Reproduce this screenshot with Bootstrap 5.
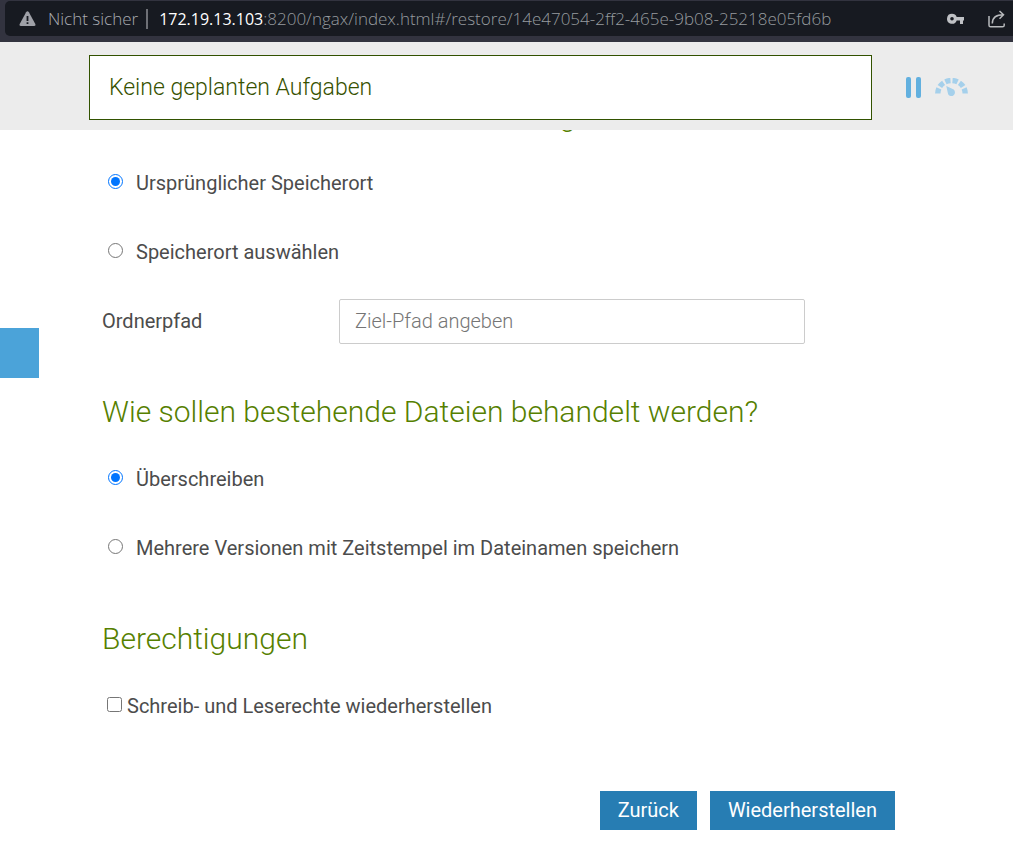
<!DOCTYPE html>
<html lang="de">
<head>
<meta charset="utf-8">
<meta name="viewport" content="width=device-width, initial-scale=1">
<title>Wiederherstellen</title>
<link href="https://cdn.jsdelivr.net/npm/bootstrap@5.3.0/dist/css/bootstrap.min.css" rel="stylesheet">
<style>
body { font-family: Roboto, "Liberation Sans", sans-serif; font-size: 20px; line-height: 24px; color: #4c4c4c; background: #fff; }
.browser-bar { background: #32333f; height: 42px; padding: 1px 0 6px 5px; }
.address { background: #171a21; border-radius: 5px 0 0 5px; height: 35px; padding: 0 8px 0 14px; font-family: "Open Sans", "Noto Sans", sans-serif; font-size: 17px; font-weight: 300; color: #a9abb1; }
.address .host { color: #fff; font-size: 16px; font-weight: 400; }
.address .path { color: #969a9f; }
.address .divider { width: 2px; height: 20px; background: #6e7076; margin: 0 11px 0 8px; }
.warn-icon { margin-right: 12px; }
.topbar { background: #ececec; height: 88px; padding: 2px 45px 0 89px; }
.task-box { height: 65px; border: 1px solid #325200; background: #fff; color: #365100; font-size: 23px; font-weight: 300; padding: 2px 19px 0; margin-right: 34px; }
.icon-btn { background: none; border: 0; padding: 0; line-height: 0; }
.pause-btn { margin-right: 14px; }
.side-tab { left: 0; top: 328px; width: 39px; height: 50px; background: #4ba3d9; border: 0; padding: 0; }
.page { padding: 0 118px 30px 102px; overflow: hidden; }
.section-title { font-size: 30px; line-height: 36px; font-weight: 300; color: #568000; margin: 50px 0 27px; }
.section-title.scrolled { margin-top: -32px; }
.line { height: 45px; padding-bottom: 2px; }
.line + .line { margin-top: 24px; }
.line input[type=radio] { width: 15px; height: 15px; margin: 0 13px 3px 6px; accent-color: #0075ff; }
.line input[type=checkbox] { width: 15px; height: 15px; margin: 0 5px 3px 5px; }
.path-line { padding-bottom: 0; }
.path-label { width: 237px; padding-bottom: 2px; }
.path-input { width: 466px; height: 45px; border: 1px solid #ccc; border-radius: 2px; font-size: 20px; font-weight: 300; padding: 0 15px 2px; }
.path-input::placeholder { color: #757575; opacity: 1; }
.actions { margin-top: 62px; gap: 13px; }
.action-btn { height: 39px; background: #277db3; color: #fff; border: 0; border-radius: 0; padding: 0 18px 1px; font-size: 20px; line-height: 24px; }
.action-btn:hover { background: #1f6a99; color: #fff; }
</style>
</head>
<body>
<div class="browser-bar">
  <div class="address d-flex align-items-center">
    <svg width="17" height="16" viewBox="0 0 17 16" class="warn-icon flex-shrink-0" aria-hidden="true"><path d="M7.1 1.2Q8.500-.7 9.900 1.200L16.300 13Q17 15 15 15H2Q0 15 .7 13Z" fill="#9fa1a8"/><path d="M7.600 5h1.800v5H7.600zM7.600 11.200h1.800V13H7.600z" fill="#171a21"/></svg>
    <span class="text-nowrap">Nicht sicher</span>
    <span class="divider"></span>
    <span class="text-nowrap"><span class="host">172.19.13.103</span><span class="path">:8200/ngax/index.html#/restore/14e47054-2ff2-465e-9b08-25218e05fd6b</span></span>
    <svg class="ms-auto me-4 flex-shrink-0" width="18" height="12" viewBox="0 0 18 12" aria-label="Passwort" role="img"><path fill-rule="evenodd" d="M6 .8a5 5 0 1 0 4.700 6.700H14V11h3V7.500h1V4.100H10.700A5 5 0 0 0 6 .8Zm0 3.200a1.800 1.800 0 1 1 0 3.600 1.800 1.800 0 0 1 0-3.600Z" fill="#bfc1c5"/></svg>
    <svg class="flex-shrink-0" width="17" height="18" viewBox="0 0 17 18" aria-label="Teilen" role="img" fill="none" stroke="#b8babd" stroke-width="1.500"><path d="M1 6V15.200Q1 16.800 2.600 16.800H14.500Q16.200 16.800 16.200 15.200V13.500M4.300 13.500C4.300 8 7.500 4.800 15.500 4.800M11.500 1l4 3.800-4 3.900"/></svg>
  </div>
</div>
<header class="topbar d-flex align-items-center">
  <div class="task-box d-flex align-items-center flex-grow-1">Keine geplanten Aufgaben</div>
  <button class="icon-btn pause-btn" type="button" aria-label="Pause"><svg width="15" height="21" viewBox="0 0 15 21" fill="#62b0df"><rect width="5" height="21" rx="2"/><rect x="10" width="5" height="21" rx="2"/></svg></button>
  <button class="icon-btn" type="button" aria-label="Drosselung"><svg width="33" height="19" viewBox="0 0 33 19"><path d="M2.800 15.500A13.700 13 0 0 1 30.200 15.500" fill="none" stroke="#a5d0eb" stroke-width="5.400" pathLength="100" stroke-dasharray="12.500 5"/><path d="M11.300 8 18.700 11.600A3.700 3.700 0 1 1 13.100 16.300Z" fill="#a5d0eb"/></svg></button>
</header>
<button class="side-tab position-absolute" type="button" aria-label="Menü"></button>
<main class="page">
  <form>
    <h2 class="section-title scrolled">Wohin sollen die Dateien wiederhergestellt werden?</h2>
    <div class="line d-flex align-items-center"><input type="radio" name="target" id="orig" checked><label for="orig">Ursprünglicher Speicherort</label></div>
    <div class="line d-flex align-items-center"><input type="radio" name="target" id="pick"><label for="pick">Speicherort auswählen</label></div>
    <div class="line path-line d-flex align-items-center"><label class="path-label" for="folder">Ordnerpfad</label><input class="path-input" type="text" id="folder" placeholder="Ziel-Pfad angeben"></div>
    <h2 class="section-title">Wie sollen bestehende Dateien behandelt werden?</h2>
    <div class="line d-flex align-items-center"><input type="radio" name="existing" id="over" checked><label for="over">Überschreiben</label></div>
    <div class="line d-flex align-items-center"><input type="radio" name="existing" id="multi"><label for="multi">Mehrere Versionen mit Zeitstempel im Dateinamen speichern</label></div>
    <h2 class="section-title">Berechtigungen</h2>
    <div class="line d-flex align-items-center"><input type="checkbox" id="perm"><label for="perm">Schreib- und Leserechte wiederherstellen</label></div>
    <div class="actions d-flex justify-content-end">
      <button class="btn action-btn" type="button">Zurück</button>
      <button class="btn action-btn" type="submit">Wiederherstellen</button>
    </div>
  </form>
</main>
<script src="https://cdn.jsdelivr.net/npm/bootstrap@5.3.0/dist/js/bootstrap.bundle.min.js"></script>
</body>
</html>
